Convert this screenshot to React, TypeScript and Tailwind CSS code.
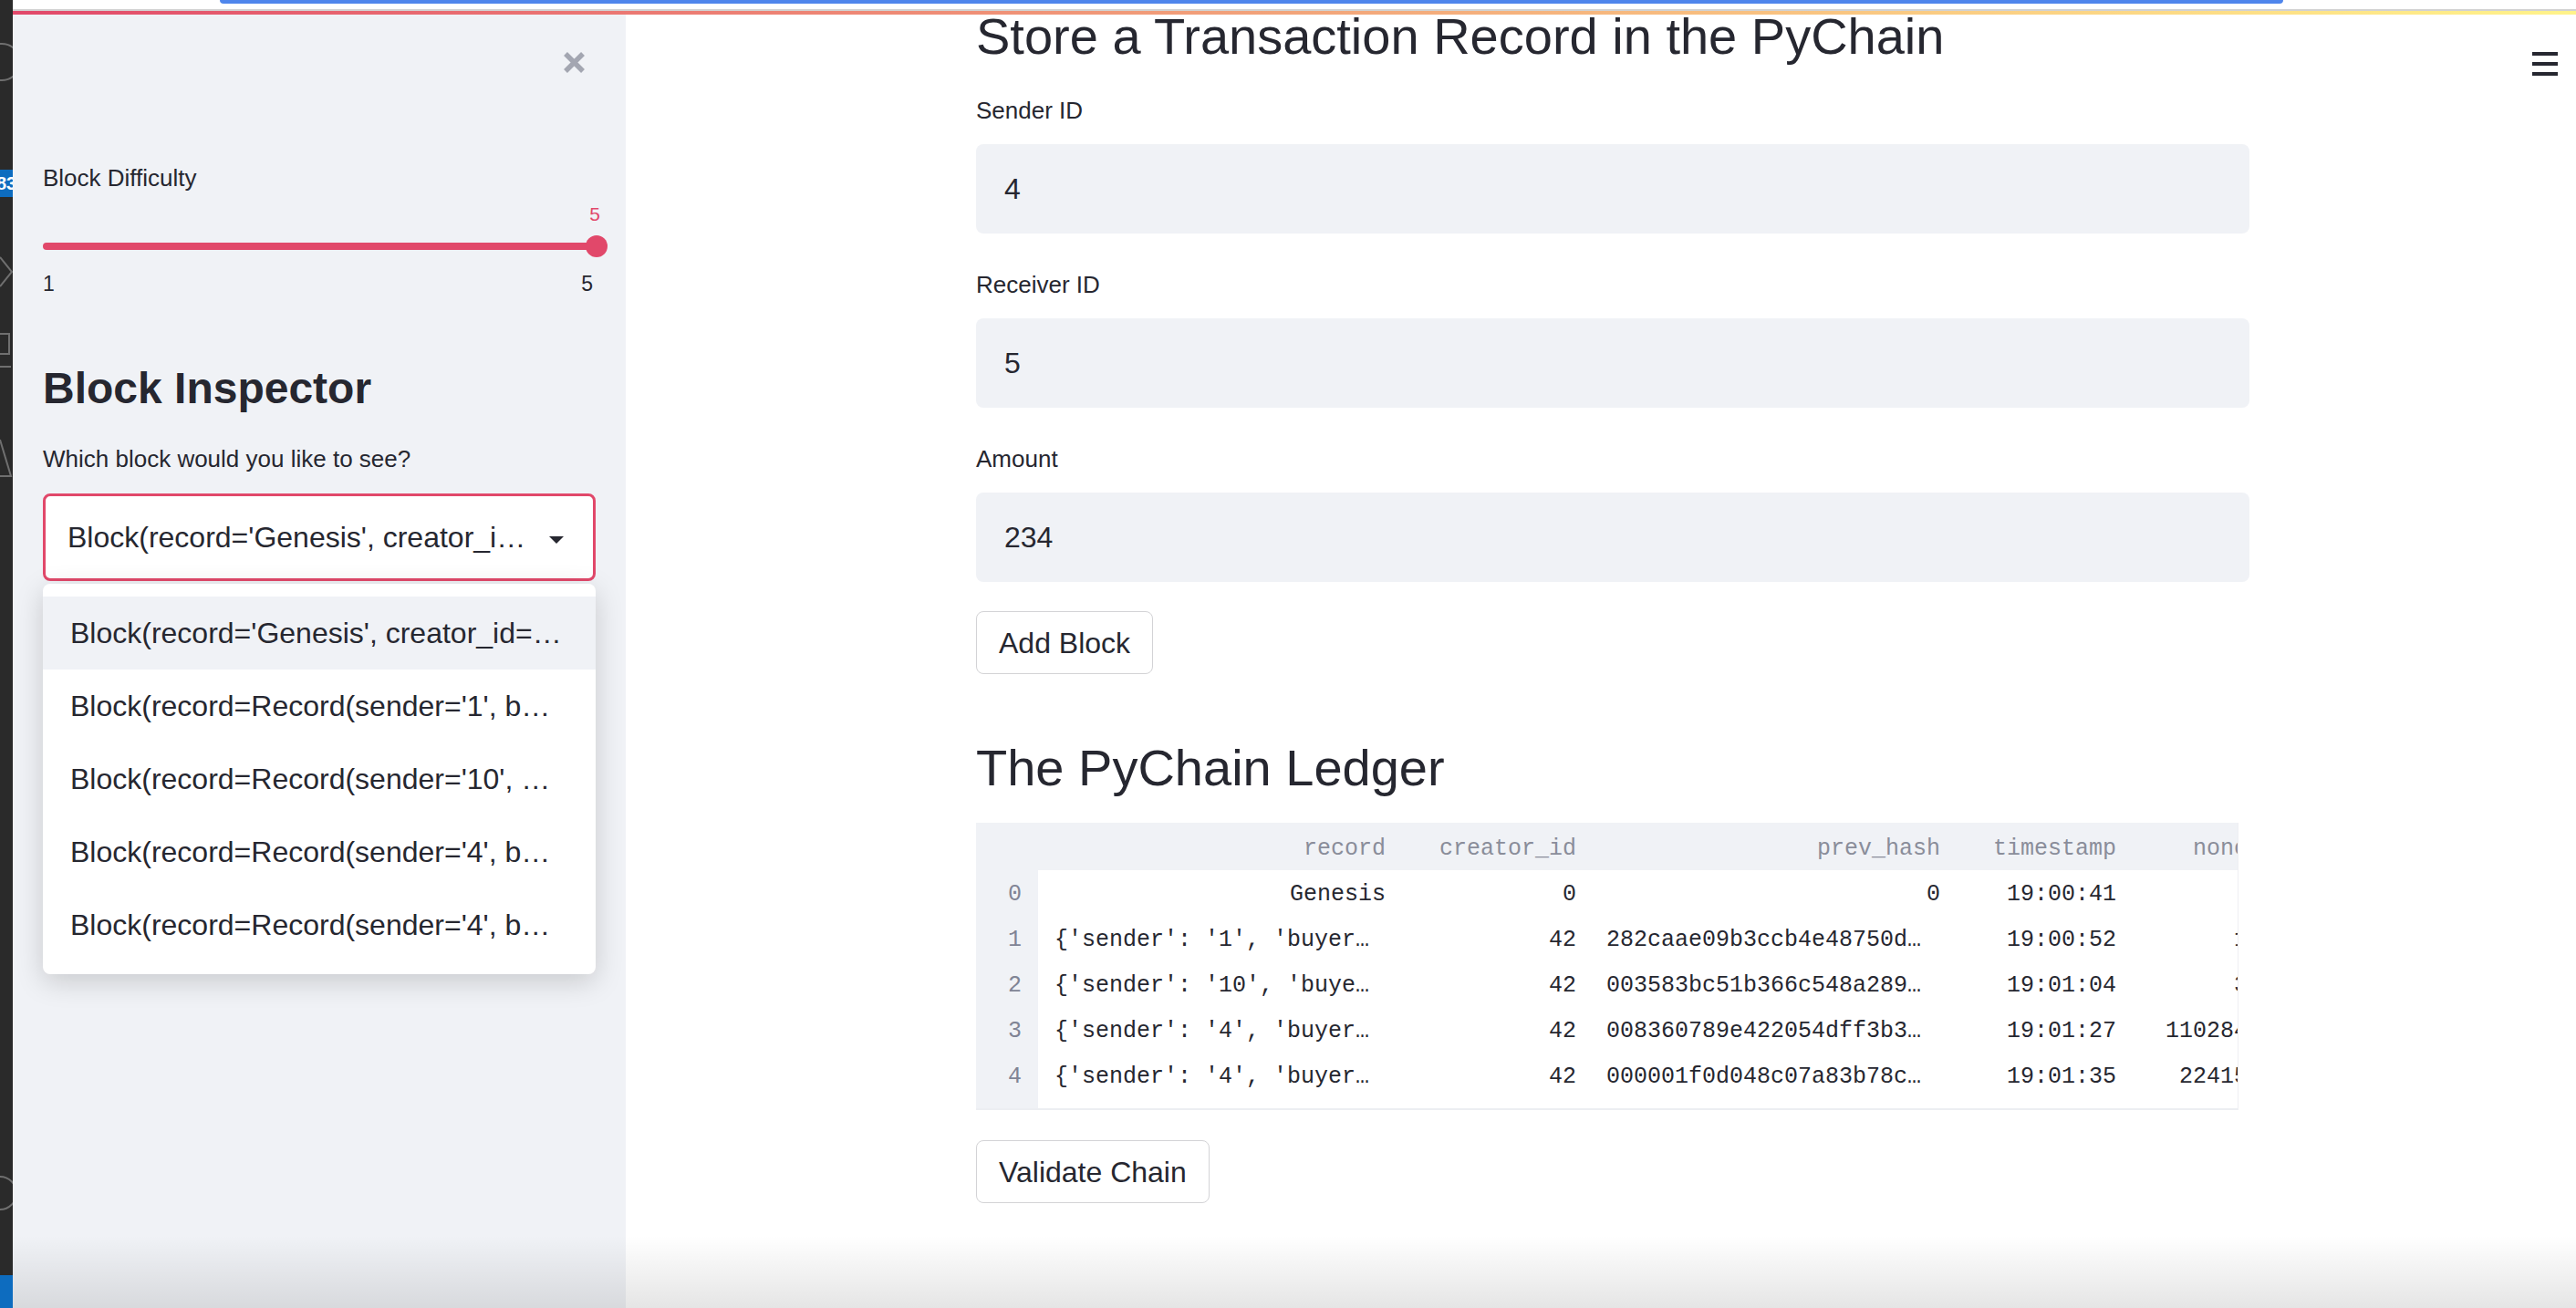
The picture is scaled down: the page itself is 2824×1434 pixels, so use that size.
import React from 'react';

const sans = "font-['Liberation_Sans',Arial,sans-serif]";
const mono = "font-['Liberation_Mono','Courier_New',monospace]";

const menuItems = [
  "Block(record='Genesis', creator_id=…",
  "Block(record=Record(sender='1', b…",
  "Block(record=Record(sender='10', …",
  "Block(record=Record(sender='4', b…",
  "Block(record=Record(sender='4', b…",
];

type Row = {
  idx: string;
  record: string;
  recordTrunc: boolean;
  creator: string;
  prev: string;
  prevTrunc: boolean;
  ts: string;
  nonce: string;
};

const rows: Row[] = [
  { idx: '0', record: 'Genesis', recordTrunc: false, creator: '0', prev: '0', prevTrunc: false, ts: '19:00:41', nonce: '0' },
  { idx: '1', record: "{'sender': '1', 'buyer…", recordTrunc: true, creator: '42', prev: '282caae09b3ccb4e48750d…', prevTrunc: true, ts: '19:00:52', nonce: '12' },
  { idx: '2', record: "{'sender': '10', 'buye…", recordTrunc: true, creator: '42', prev: '003583bc51b366c548a289…', prevTrunc: true, ts: '19:01:04', nonce: '31' },
  { idx: '3', record: "{'sender': '4', 'buyer…", recordTrunc: true, creator: '42', prev: '008360789e422054dff3b3…', prevTrunc: true, ts: '19:01:27', nonce: '1102845' },
  { idx: '4', record: "{'sender': '4', 'buyer…", recordTrunc: true, creator: '42', prev: '000001f0d048c07a83b78c…', prevTrunc: true, ts: '19:01:35', nonce: '224153' },
];

const Field: React.FC<{ label: string; value: string; first?: boolean }> = ({ label, value, first }) => (
  <>
    <div className={`${first ? 'mt-[40px]' : 'mt-[43px]'} h-[26px] text-[26px] leading-none text-[#262730]`}>{label}</div>
    <div className="mt-[24px] h-[98px] w-[1396px] rounded-[8px] bg-[#f0f2f6] flex items-center pl-[31px] text-[32px] leading-none text-[#262730]">
      {value}
    </div>
  </>
);

const App: React.FC = () => {
  return (
    <div className={`relative w-[2824px] h-[1434px] overflow-hidden bg-white flex ${sans}`}>
      {/* editor activity bar peeking in on the left */}
      <div className="w-[14px] h-full bg-[#2a2a2a] flex flex-col overflow-hidden shrink-0">
        <svg width="14" height="60" className="mt-[38px]">
          <circle cx="2" cy="30" r="20" fill="none" stroke="#6f6f6f" strokeWidth="2" />
        </svg>
        <div className="mt-[88px] h-[30px] bg-[#0d6cbf] text-white text-[20px] leading-[30px] font-bold -ml-[4px]">83</div>
        <svg width="14" height="40" className="mt-[62px]">
          <path d="M0 4 L13 20 L0 36" fill="none" stroke="#6f6f6f" strokeWidth="2" />
        </svg>
        <svg width="14" height="60" className="mt-[44px]">
          <rect x="-10" y="4" width="20" height="22" fill="none" stroke="#6f6f6f" strokeWidth="2" />
          <path d="M0 40 L12 40" stroke="#6f6f6f" strokeWidth="2" />
        </svg>
        <svg width="14" height="60" className="mt-[50px]">
          <path d="M0 10 L12 50 L0 50" fill="none" stroke="#6f6f6f" strokeWidth="2" />
        </svg>
        <div className="flex-1" />
        <svg width="14" height="60" className="mb-[60px]">
          <circle cx="0" cy="30" r="18" fill="none" stroke="#6f6f6f" strokeWidth="2" />
        </svg>
        <div className="h-[36px] bg-[#0d6cbf]" />
      </div>

      <div className="flex-1 flex flex-col">
        {/* top decoration */}
        <div className="h-[10px] bg-white">
          <div className="ml-[227px] w-[2262px] h-[4px] rounded-b-[6px] bg-[#4f86ec]" />
        </div>
        <div className="h-[2px] bg-[#d2d2d2]" />
        <div className="h-[4px] bg-gradient-to-r from-[#e1486a] via-[#f2a47a] to-[#fff38a]" />

        <div className="flex-1 flex">
          {/* sidebar */}
          <div className="w-[672px] shrink-0 bg-[#f0f2f6] px-[33px] flex flex-col">
            <div className="mt-[39px] h-[27px] flex justify-end mr-[10px]">
              <svg width="27" height="27" viewBox="0 0 27 27">
                <path d="M4 4 L23 23 M23 4 L4 23" stroke="#a3a6b1" strokeWidth="5.5" />
              </svg>
            </div>
            <div className="mt-[100px] h-[26px] text-[26px] leading-none text-[#262730]">Block Difficulty</div>
            <div className="mt-[16px] h-[21px] flex justify-end -mr-[5px]">
              <span className="text-[21px] leading-none text-[#e1486a]">5</span>
            </div>
            <div className="mt-[13px] h-[24px] flex items-center -mr-[13px]">
              <div className="flex-1 h-[8px] rounded-l-full bg-[#e1486a]" />
              <div className="w-[24px] h-[24px] rounded-full bg-[#e1486a] -ml-[12px]" />
            </div>
            <div className="mt-[18px] h-[23px] flex justify-between mr-[3px] text-[23px] leading-none text-[#262730]">
              <span>1</span>
              <span>5</span>
            </div>
            <div className="mt-[79px] h-[48px] text-[48px] leading-none font-bold text-[#262730]">Block Inspector</div>
            <div className="mt-[40px] h-[26px] text-[26px] leading-none text-[#262730]">Which block would you like to see?</div>
            <div className="relative mt-[25px]">
              <div className="h-[96px] rounded-[8px] border-[3px] border-[#e1486a] bg-white flex items-center pl-[24px] pr-[32px] text-[32px] leading-none text-[#262730]">
                <span className="flex-1 whitespace-nowrap">Block(record='Genesis', creator_i…</span>
                <svg width="16" height="8" viewBox="0 0 16 8" className="mt-[6px]">
                  <path d="M0 0 L16 0 L8 8 Z" fill="#262730" />
                </svg>
              </div>
              <div className="absolute left-0 right-0 top-[99px] z-10 rounded-[8px] bg-white py-[14px] shadow-[0_8px_30px_rgba(0,0,0,0.17)]">
                {menuItems.map((item, i) => (
                  <div
                    key={i}
                    className={`h-[80px] flex items-center px-[30px] text-[32px] leading-none text-[#262730] whitespace-nowrap ${i === 0 ? 'bg-[#f0f2f6]' : ''}`}
                  >
                    {item}
                  </div>
                ))}
              </div>
            </div>
          </div>

          {/* main */}
          <div className="flex-1 pl-[384px] flex flex-col">
            <div className="-mt-[4px] h-[56px] text-[56px] leading-none text-[#262730] whitespace-nowrap">
              Store a Transaction Record in the PyChain
            </div>
            <Field label="Sender ID" value="4" first />
            <Field label="Receiver ID" value="5" />
            <Field label="Amount" value="234" />
            <div className="mt-[32px]">
              <button className="h-[69px] px-[24px] rounded-[8px] border border-[#d3d3d6] bg-white text-[32px] leading-none text-[#262730]">
                Add Block
              </button>
            </div>
            <div className="mt-[75px] h-[56px] text-[56px] leading-none text-[#262730] whitespace-nowrap">The PyChain Ledger</div>

            {/* ledger table */}
            <div className={`mt-[32px] w-[1384px] overflow-hidden border-r border-[#eeeff3] ${mono} text-[25px] leading-none`}>
              <div className="flex h-[52px] pt-[4px] bg-[#f0f2f6] text-[#8a8d9a] items-center">
                <div className="w-[68px] shrink-0" />
                <div className="w-[399px] shrink-0 text-right pr-[18px]">record</div>
                <div className="w-[209px] shrink-0 text-right pr-[18px]">creator_id</div>
                <div className="w-[399px] shrink-0 text-right pr-[18px]">prev_hash</div>
                <div className="w-[193px] shrink-0 text-right pr-[18px]">timestamp</div>
                <div className="w-[159px] shrink-0 text-right pr-[18px]">nonce</div>
              </div>
              {rows.map((r) => (
                <div key={r.idx} className="flex h-[50px] items-stretch">
                  <div className="w-[68px] shrink-0 bg-[#f0f2f6] text-[#808495] flex items-center justify-end pr-[18px] pt-[3px]">{r.idx}</div>
                  <div className={`w-[399px] shrink-0 flex items-center pt-[3px] text-[#262730] whitespace-nowrap ${r.recordTrunc ? 'pl-[18px]' : 'justify-end pr-[18px]'}`}>{r.record}</div>
                  <div className="w-[209px] shrink-0 flex items-center justify-end pr-[18px] pt-[3px] text-[#262730]">{r.creator}</div>
                  <div className={`w-[399px] shrink-0 flex items-center pt-[3px] text-[#262730] whitespace-nowrap ${r.prevTrunc ? 'pl-[15px]' : 'justify-end pr-[18px]'}`}>{r.prev}</div>
                  <div className="w-[193px] shrink-0 flex items-center justify-end pr-[18px] pt-[3px] text-[#262730]">{r.ts}</div>
                  <div className="w-[159px] shrink-0 flex items-center justify-end pr-[18px] pt-[3px] text-[#262730]">{r.nonce}</div>
                </div>
              ))}
              <div className="flex h-[11px]">
                <div className="w-[68px] shrink-0 bg-[#f0f2f6]" />
              </div>
              <div className="h-[2px] bg-[#eceef2]" />
            </div>

            <div className="mt-[33px]">
              <button className="h-[69px] px-[24px] rounded-[8px] border border-[#d3d3d6] bg-white text-[32px] leading-none text-[#262730]">
                Validate Chain
              </button>
            </div>
          </div>
        </div>
      </div>

      {/* hamburger menu */}
      <div className="absolute top-[57px] right-[20px] w-[28px] flex flex-col gap-[7px]">
        <div className="h-[4px] bg-[#262730]" />
        <div className="h-[4px] bg-[#262730]" />
        <div className="h-[4px] bg-[#262730]" />
      </div>

      {/* window shadow along the bottom edge */}
      <div className="pointer-events-none absolute left-[14px] right-0 bottom-0 h-[80px] bg-gradient-to-b from-transparent to-[rgba(0,0,0,0.1)]" />
    </div>
  );
};

export default App;
